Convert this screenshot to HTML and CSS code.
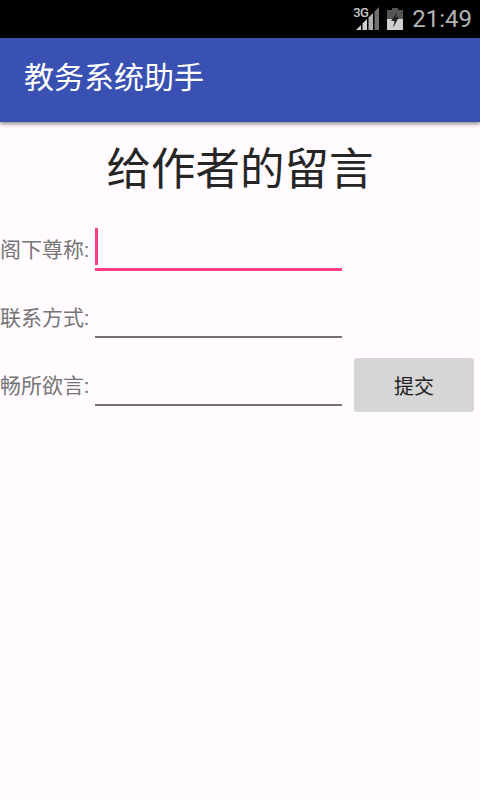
FILE: index.html
```html
<!DOCTYPE html>
<html>
<head>
  <title>教务系统助手</title>
  <link rel="stylesheet" href="styles.css">
</head>
<body>
  <div class="status-bar">
    <div class="signal">
      <span class="net">3G</span>
      <svg width="24" height="24" viewBox="0 0 24 24">
        <polygon points="1,24 6,19 6,24" fill="#d0d0d0"/>
        <polygon points="7.5,24 7.5,17.5 12,13 12,24" fill="#d0d0d0"/>
        <polygon points="13.5,24 13.5,11.5 18,7 18,24" fill="#b0b0b0"/>
        <polygon points="19.5,24 19.5,5.5 24,1 24,24" fill="#707070"/>
      </svg>
    </div>
    <svg class="battery" width="16" height="22" viewBox="0 0 16 22">
      <rect x="5" y="0" width="6" height="2" fill="#555"/>
      <rect x="0" y="2" width="16" height="9" fill="#555"/>
      <rect x="0" y="11" width="16" height="11" fill="#d0d0d0"/>
      <polygon points="10,4 4,13 7.5,13 6,20 12,9 8.5,9" fill="#222"/>
    </svg>
    <span class="clock">21:49</span>
  </div>
  <div class="app-bar">教务系统助手</div>

  <h1 class="title">给作者的留言</h1>

  <div class="form">
    <div class="row">
      <label class="label">阁下尊称:</label>
      <div class="field focused"><span class="caret"></span></div>
    </div>
    <div class="row">
      <label class="label">联系方式:</label>
      <div class="field"></div>
    </div>
    <div class="row">
      <label class="label">畅所欲言:</label>
      <div class="field"></div>
      <button class="submit">提交</button>
    </div>
  </div>
</body>
</html>
```

FILE: styles.css
```css
html, body {
  margin: 0;
  padding: 0;
}

body {
  width: 480px;
  height: 800px;
  overflow: hidden;
  background-color: #fffbff;
  font-family: Roboto, "Noto Sans CJK SC", sans-serif;
}

.status-bar {
  height: 38px;
  background-color: #000;
  display: flex;
  align-items: center;
  justify-content: flex-end;
  padding-right: 8px;
}

.signal {
  position: relative;
  width: 26px;
  height: 26px;
  margin-right: 8px;
  margin-bottom: 4px;
  display: flex;
  align-items: flex-end;
  justify-content: flex-end;
}

.net {
  position: absolute;
  left: 0;
  top: 2px;
  color: #c8c8c8;
  font-size: 13px;
  line-height: 13px;
  font-weight: 500;
  letter-spacing: -0.5px;
}

.battery {
  margin-right: 9px;
}

.clock {
  color: #b4b4b4;
  font-size: 24px;
  line-height: 38px;
}

.app-bar {
  height: 84px;
  box-sizing: border-box;
  padding-left: 24px;
  background-color: #3951b3;
  color: #fff;
  font-size: 30px;
  line-height: 80px;
  box-shadow: 0 2px 4px rgba(0, 0, 0, 0.45);
}

.title {
  margin: 0;
  height: 106px;
  text-align: center;
  color: #262626;
  font-size: 44.5px;
  font-weight: 400;
  line-height: 97px;
}

.row {
  height: 68px;
  display: flex;
  align-items: flex-start;
}

.label {
  width: 95px;
  color: #757575;
  font-size: 21px;
  line-height: 28px;
  margin-top: 8px;
  white-space: nowrap;
}

.field {
  width: 247px;
  height: 40px;
  border-bottom: 2px solid #747074;
}

.field.focused {
  border-bottom: 3px solid #ff3d84;
}

.caret {
  display: block;
  width: 3px;
  height: 37px;
  background-color: #ff3d84;
}

.submit {
  width: 120px;
  height: 54px;
  margin-top: -6px;
  margin-left: 12px;
  border: none;
  border-radius: 3px;
  background-color: #d6d6d6;
  color: #222;
  font-family: inherit;
  font-size: 20px;
}
```
